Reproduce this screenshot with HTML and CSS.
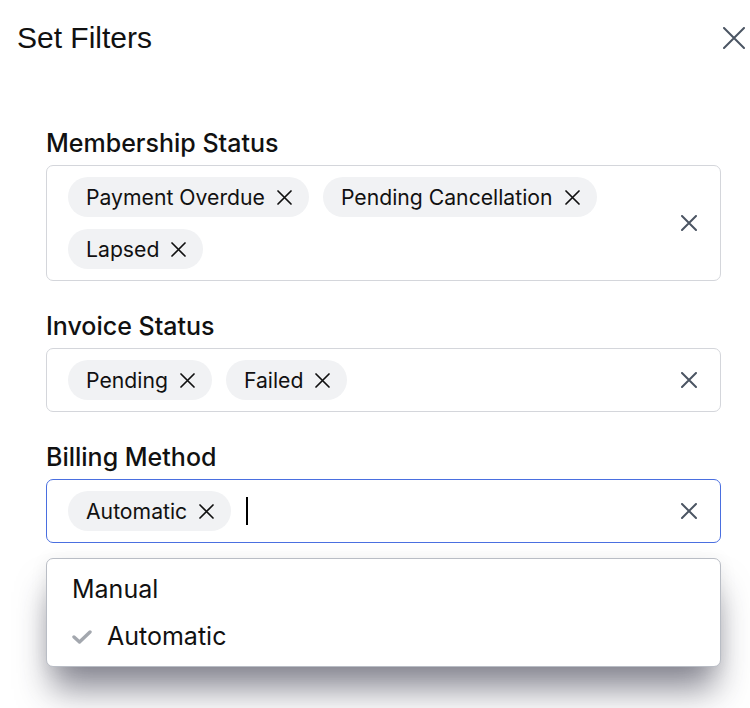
FILE: index.html
```html
<!DOCTYPE html>
<html lang="en">
<head>
<meta charset="utf-8">
<title>Set Filters</title>
<link rel="stylesheet" href="styles.css">
</head>
<body>
<div class="dialog">
  <header class="dialog-header">
    <h1 class="dialog-title">Set Filters</h1>
    <button class="icon-btn close-btn" aria-label="Close">
      <svg width="22" height="22" viewBox="0 0 22 22"><path d="M1 1L21 21M21 1L1 21" stroke="#4b5563" stroke-width="2" stroke-linecap="round" fill="none"/></svg>
    </button>
  </header>

  <div class="filters">
    <div class="field">
      <label class="field-label">Membership Status</label>
      <div class="multiselect">
        <div class="chips">
          <span class="chip">Payment Overdue<svg class="chip-x" viewBox="0 0 15 15"><path d="M1 1L14 14M14 1L1 14"/></svg></span>
          <span class="chip">Pending Cancellation<svg class="chip-x" viewBox="0 0 15 15"><path d="M1 1L14 14M14 1L1 14"/></svg></span>
          <span class="chip">Lapsed<svg class="chip-x" viewBox="0 0 15 15"><path d="M1 1L14 14M14 1L1 14"/></svg></span>
        </div>
        <svg class="clear-x" viewBox="0 0 16 16"><path d="M1 1L15 15M15 1L1 15"/></svg>
      </div>
    </div>

    <div class="field">
      <label class="field-label">Invoice Status</label>
      <div class="multiselect">
        <div class="chips">
          <span class="chip">Pending<svg class="chip-x" viewBox="0 0 15 15"><path d="M1 1L14 14M14 1L1 14"/></svg></span>
          <span class="chip">Failed<svg class="chip-x" viewBox="0 0 15 15"><path d="M1 1L14 14M14 1L1 14"/></svg></span>
        </div>
        <svg class="clear-x" viewBox="0 0 16 16"><path d="M1 1L15 15M15 1L1 15"/></svg>
      </div>
    </div>

    <div class="field field-open">
      <label class="field-label">Billing Method</label>
      <div class="multiselect is-focused">
        <div class="chips">
          <span class="chip">Automatic<svg class="chip-x" viewBox="0 0 15 15"><path d="M1 1L14 14M14 1L1 14"/></svg></span>
          <span class="caret"></span>
        </div>
        <svg class="clear-x" viewBox="0 0 16 16"><path d="M1 1L15 15M15 1L1 15"/></svg>
      </div>
      <ul class="menu">
        <li class="menu-item">Manual</li>
        <li class="menu-item is-selected">
          <svg class="check" viewBox="0 0 20 14"><path d="M2 7L7.5 12L18 2"/></svg>Automatic
        </li>
      </ul>
    </div>
  </div>
</div>
</body>
</html>
```

FILE: styles.css
```css
* {
  box-sizing: border-box;
}

html, body {
  margin: 0;
  padding: 0;
  background: #ffffff;
}

body {
  font-family: Inter, "Noto Sans", sans-serif;
  color: #111111;
  width: 750px;
  height: 708px;
  overflow: hidden;
}

.dialog {
  padding: 20px 5px 0 17px;
}

.dialog-header {
  display: flex;
  align-items: center;
  justify-content: space-between;
}

.dialog-title {
  margin: 0;
  font-family: "Liberation Sans", Arial, sans-serif;
  font-weight: 400;
  font-size: 30px;
  line-height: 36px;
  color: #111111;
}

.icon-btn {
  border: 0;
  background: none;
  padding: 0;
  display: flex;
}

.filters {
  margin-top: 71px;
  padding: 0 24px 0 29px;
  display: flex;
  flex-direction: column;
  gap: 29px;
}

.field {
  position: relative;
  display: flex;
  flex-direction: column;
}

.field-label {
  font-size: 25px;
  font-weight: 500;
  line-height: 32px;
  margin-bottom: 6px;
  color: #111111;
}

.multiselect {
  display: flex;
  align-items: center;
  border: 1px solid #d4d6db;
  border-radius: 7px;
  padding: 11px 23px 11px 21px;
  background: #ffffff;
}

.multiselect.is-focused {
  border-color: #4a6fe0;
}

.chips {
  flex: 1;
  display: flex;
  flex-wrap: wrap;
  align-items: center;
  gap: 12px 14px;
}

.chip {
  display: inline-flex;
  align-items: center;
  height: 40px;
  padding: 0 17px 0 18px;
  border-radius: 20px;
  background: #f1f2f4;
  font-size: 21.2px;
  line-height: 40px;
  color: #111111;
  white-space: nowrap;
}

.chip-x {
  width: 15px;
  height: 15px;
  margin-left: 12px;
  fill: none;
  stroke: #111111;
  stroke-width: 1.7;
  stroke-linecap: round;
}

.caret {
  display: block;
  width: 2px;
  height: 28px;
  margin-left: 1px;
  background: #000000;
}

.clear-x {
  flex: none;
  width: 16px;
  height: 16px;
  fill: none;
  stroke: #4b5563;
  stroke-width: 2;
  stroke-linecap: round;
}

.menu {
  position: absolute;
  top: calc(100% + 15px);
  left: 0;
  right: 0;
  margin: 0;
  padding: 7px 0 6px;
  list-style: none;
  background: #ffffff;
  border: 1px solid #b9bdc5;
  border-radius: 7px;
  box-shadow: 0 28px 34px -6px rgba(40, 40, 60, 0.55), 0 2px 18px rgba(0, 0, 0, 0.07);
}

.menu-item {
  display: flex;
  align-items: center;
  padding: 5px 25px;
  font-size: 25px;
  line-height: 37px;
  color: #111111;
}

.check {
  width: 20px;
  height: 14px;
  margin-right: 15px;
  fill: none;
  stroke: #a3a7ae;
  stroke-width: 3.4;
  stroke-linecap: round;
  stroke-linejoin: round;
}
```
